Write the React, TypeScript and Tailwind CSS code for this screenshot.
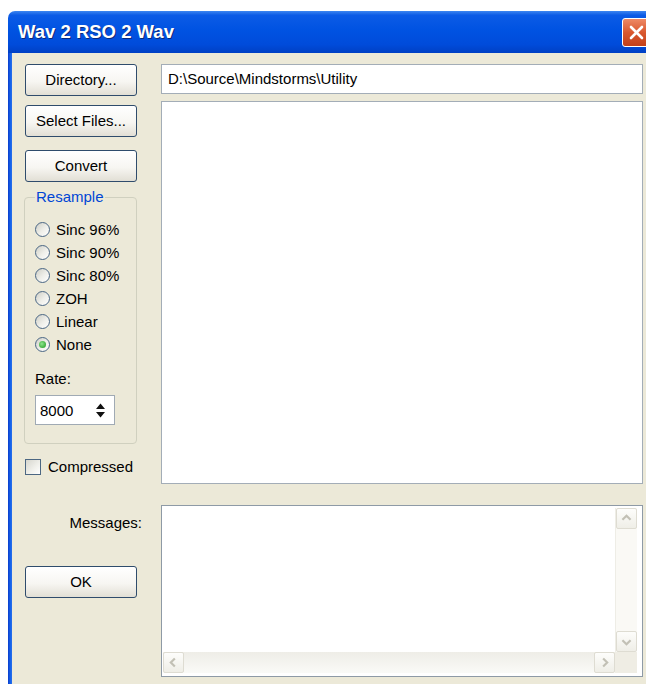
import React from "react";

const sans = "font-['Liberation_Sans',Arial,sans-serif]";

function XpButton({ label }: { label: string }) {
  return (
    <button className="flex h-[32px] w-[112px] items-center justify-center rounded-[3px] border border-[#2F4C6C] bg-[linear-gradient(180deg,#FFFFFF_0%,#F7F6F2_55%,#E2DFD5_100%)] text-[15px] text-black">
      {label}
    </button>
  );
}

function Radio({ label, checked = false }: { label: string; checked?: boolean }) {
  return (
    <div className="flex h-[23px] items-center">
      <span className="flex h-[15px] w-[15px] items-center justify-center rounded-full border border-[#4A6684] bg-[linear-gradient(135deg,#CFCFC6_0%,#EFEFEA_55%,#FFFFFF_100%)]">
        {checked && (
          <span className="h-[7px] w-[7px] rounded-full bg-[radial-gradient(circle_at_40%_40%,#8DE68D,#1B951B)]" />
        )}
      </span>
      <span className="ml-[6px] text-[15px] leading-none text-black">{label}</span>
    </div>
  );
}

type Dir = "up" | "down" | "left" | "right";

const chevrons: Record<Dir, string> = {
  up: "M6 12 L10.5 7.5 L15 12",
  down: "M6 9 L10.5 13.5 L15 9",
  left: "M12 6 L7.5 10.5 L12 15",
  right: "M9 6 L13.5 10.5 L9 15",
};

// disabled XP-style scroll arrow button
function ScrollBtn({ dir }: { dir: Dir }) {
  return (
    <div className="h-[21px] w-[21px] shrink-0 rounded-[2px] border border-[#DEDCD2] bg-[linear-gradient(180deg,#FDFDFB_0%,#EFEEE7_100%)]">
      <svg width="19" height="19" viewBox="0 0 21 21">
        <path d={chevrons[dir]} fill="none" stroke="#C2C0B5" strokeWidth="2.4" />
      </svg>
    </div>
  );
}

export default function App() {
  return (
    <div className={`h-[684px] w-[646px] overflow-hidden bg-white ${sans}`}>
      <div className="ml-[8px] mt-[11px] flex h-[673px] w-[648px] flex-col">
        {/* Title bar */}
        <div className="flex h-[42px] shrink-0 items-center justify-between rounded-tl-[7px] bg-[linear-gradient(180deg,#3D86F0_0%,#0C5BE6_10%,#0053E2_45%,#004BDA_80%,#0040C4_100%)] pl-[10px] pr-[5px]">
          <span className="text-[18.5px] font-bold text-white [text-shadow:1px_1px_0_#0B2A7A]">
            Wav 2 RSO 2 Wav
          </span>
          <div className="mt-[1px] flex h-[29px] w-[29px] items-center justify-center rounded-[3px] border border-white bg-[linear-gradient(180deg,#EE8A66_0%,#D9582F_50%,#C2401A_100%)]">
            <svg width="17" height="17" viewBox="0 0 17 17">
              <path d="M3 3 L14 14 M14 3 L3 14" stroke="#FFFFFF" strokeWidth="2.6" strokeLinecap="round" />
            </svg>
          </div>
        </div>

        {/* Client area */}
        <div className="flex flex-1">
          <div className="w-[4px] bg-[linear-gradient(90deg,#0A3CCB_0%,#1462EA_60%,#2A6FEA_100%)]" />
          <div className="flex flex-1 bg-[#ECE9D8] pl-[13px] pt-[11px] text-black">
            {/* Left column */}
            <div className="flex w-[112px] flex-col">
              <XpButton label="Directory..." />
              <div className="mt-[9px]">
                <XpButton label="Select Files..." />
              </div>
              <div className="mt-[13px]">
                <XpButton label="Convert" />
              </div>

              <fieldset className="-ml-[1px] mt-[7px] w-[113px] rounded-[4px] border border-[#D0D0BF] pb-[18px] pl-[10px]">
                <legend className="px-[1px] text-[15px] leading-[16px] text-[#0046D5]">Resample</legend>
                <div className="mt-[13px] flex flex-col">
                  <Radio label="Sinc 96%" />
                  <Radio label="Sinc 90%" />
                  <Radio label="Sinc 80%" />
                  <Radio label="ZOH" />
                  <Radio label="Linear" />
                  <Radio label="None" checked />
                </div>
                <div className="mt-[15px] text-[15px] leading-[16px]">Rate:</div>
                <div className="mt-[8px] flex h-[30px] w-[80px] items-center justify-between border border-[#A0AAB4] bg-white pl-[4px] pr-[8px]">
                  <span className="text-[15px] leading-none">8000</span>
                  <svg width="11" height="17" viewBox="0 0 11 17">
                    <path d="M1 7 L5.5 1.5 L10 7 Z M1 10 L5.5 15.5 L10 10 Z" fill="#111111" />
                  </svg>
                </div>
              </fieldset>

              <div className="mt-[14px] flex h-[17px] items-center">
                <span className="h-[16px] w-[16px] border border-[#4C6782] bg-[linear-gradient(135deg,#D6D6CE_0%,#F1F1EC_60%,#FFFFFF_100%)]" />
                <span className="ml-[7px] text-[15px] leading-none">Compressed</span>
              </div>

              <div className="mt-[40px] w-[117px] text-right text-[15px] leading-[16px]">Messages:</div>
              <div className="mt-[35px]">
                <XpButton label="OK" />
              </div>
            </div>

            {/* Right column */}
            <div className="ml-[24px] flex w-[482px] flex-col">
              <div className="flex h-[30px] items-center border border-[#A3ADB7] bg-white pl-[6px] text-[15px]">
                D:\Source\Mindstorms\Utility
              </div>
              <div className="mt-[7px] h-[383px] border border-[#A3ADB7] bg-white" />

              <div className="mt-[21px] flex h-[172px] flex-col border border-[#8E9AA6] bg-white pb-[3px] pr-[5px] pt-[2px]">
                <div className="flex flex-1">
                  <div className="flex-1" />
                  <div className="flex w-[22px] flex-col border-l border-[#EEEDE6] bg-[#FAF9F5]">
                    <ScrollBtn dir="up" />
                    <div className="flex-1" />
                    <ScrollBtn dir="down" />
                  </div>
                </div>
                <div className="flex h-[21px] pl-[1px]">
                  <div className="flex flex-1 bg-[linear-gradient(180deg,#EEEDE7_0%,#FAFAF7_100%)]">
                    <ScrollBtn dir="left" />
                    <div className="flex-1" />
                    <ScrollBtn dir="right" />
                  </div>
                  <div className="w-[22px] bg-[#EFEDE4]" />
                </div>
              </div>
            </div>
          </div>
        </div>
      </div>
    </div>
  );
}
